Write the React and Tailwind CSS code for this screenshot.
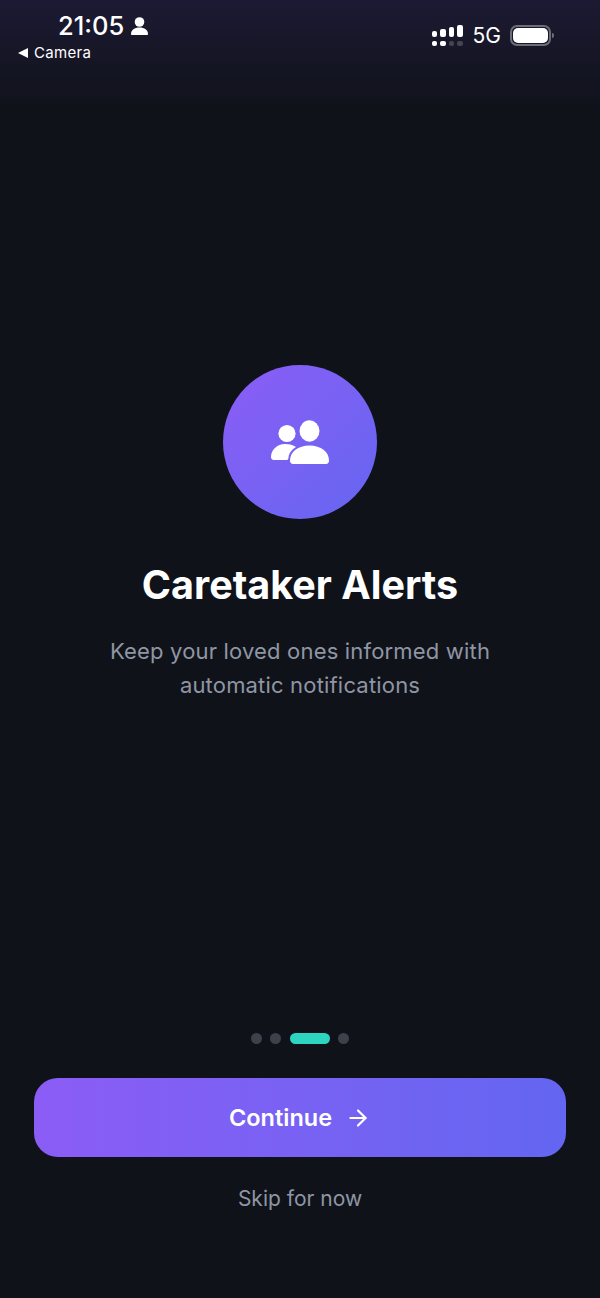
import { ArrowRight } from 'lucide-react';

function UsersIcon() {
  return (
    <svg width="58" height="44" viewBox="0 0 58 44" fill="white">
      <circle cx="16" cy="13.500" r="8.600" />
      <path d="M0 37c0-7 6-13 14-13 5 0 8 1 11 3-4 2.500-7 6-7.500 10.500-.1 1.300-.6 2.500-1.500 2.500H3c-1.800 0-3-1.200-3-3z" />
      <ellipse cx="38.500" cy="11" rx="10" ry="10.700" />
      <path d="M19 40.500C19 32 27 25.500 38.500 25.500S58 32 58 40.500c0 2-1 3.500-3 3.500H22c-2 0-3-1.500-3-3.500z" />
    </svg>
  );
}

function SignalBars() {
  const heights = ['h-[6px]', 'h-[8px]', 'h-[10px]', 'h-[12px]'];
  return (
    <div className="flex gap-[3px] items-end mr-[1px]">
      {heights.map((h, i) => (
        <div key={i} className="flex flex-col gap-[4px] items-center">
          <div className={`w-[5.500px] ${h} rounded-[2px] bg-white`} />
          <div className={`w-[5.500px] h-[5px] rounded-[2px] ${i < 2 ? 'bg-white' : 'bg-[#44454f]'}`} />
        </div>
      ))}
    </div>
  );
}

function StatusBar() {
  return (
    <div className="flex justify-between h-[70px] pl-[18px] pr-[46px]">
      <div className="flex flex-col pt-[11px]">
        <div className="flex items-center gap-[7px] pl-[40px] h-[29px]">
          <span className="text-[25.500px] leading-[29px] font-medium text-white">21:05</span>
          <svg width="17" height="18" viewBox="0 0 17 18" fill="white">
            <circle cx="8.500" cy="5" r="4.800" />
            <path d="M0 17c0-4 3.500-6.500 8.500-6.500S17 13 17 17c0 .6-.4 1-1 1H1c-.6 0-1-.4-1-1z" />
          </svg>
        </div>
        <div className="flex items-center gap-[6px] mt-[3px]">
          <svg width="10" height="10" viewBox="0 0 10 10" fill="white">
            <path d="M10 0v10L0 5z" />
          </svg>
          <span className="text-[15px] leading-[20px] text-white tracking-[0.3px]">Camera</span>
        </div>
      </div>
      <div className="flex items-center gap-[9px] h-[72px] pb-[1px]">
        <SignalBars />
        <span className="text-[21px] leading-[24px] text-white">5G</span>
        <div className="flex items-center gap-[1px]">
          <div className="w-[41px] h-[21px] rounded-[7px] border-2 border-[#6c6d76] p-[1px]">
            <div className="w-full h-full rounded-[5px] bg-white" />
          </div>
          <div className="w-[2px] h-[5px] rounded-r bg-[#6c6d76]" />
        </div>
      </div>
    </div>
  );
}

export default function App() {
  return (
    <div
      className="h-[1298px] flex flex-col bg-[#10121a] bg-gradient-to-b from-[#1c1a33] to-[#10121a] to-[110px] text-white"
      style={{ fontFamily: 'Inter, sans-serif' }}
    >
      <StatusBar />

      <div className="flex flex-col items-center pt-[295px] flex-1">
        <div className="w-[154px] h-[154px] rounded-full flex items-center justify-center bg-gradient-to-br from-[#8b5cf6] to-[#6366f1]">
          <UsersIcon />
        </div>
        <h1 className="mt-[44px] text-[39.500px] leading-[44px] font-bold">Caretaker Alerts</h1>
        <p className="mt-[27px] text-[22px] leading-[34px] tracking-[0.18px] text-center text-[#8f96a3]">
          Keep your loved ones informed with
          <br />
          automatic notifications
        </p>
      </div>

      <div className="flex justify-center items-center gap-[8.330px] mb-[34px]">
        <div className="w-[11px] h-[11px] rounded-full bg-[#3c414b]" />
        <div className="w-[11px] h-[11px] rounded-full bg-[#3c414b]" />
        <div className="w-[40px] h-[11px] rounded-full bg-[#2dd4bf]" />
        <div className="w-[11px] h-[11px] rounded-full bg-[#3c414b]" />
      </div>

      <div className="px-[34px]">
        <button className="w-full h-[79px] rounded-[24px] flex items-center justify-center gap-[13px] bg-gradient-to-r from-[#8b5cf6] to-[#6366f1] text-[23.500px] font-semibold text-white">
          Continue
          <ArrowRight size={26} strokeWidth={2} />
        </button>
      </div>

      <div className="text-center mt-[27px] mb-[84px] text-[21px] leading-[30px] text-[#8f96a3]">
        Skip for now
      </div>
    </div>
  );
}
